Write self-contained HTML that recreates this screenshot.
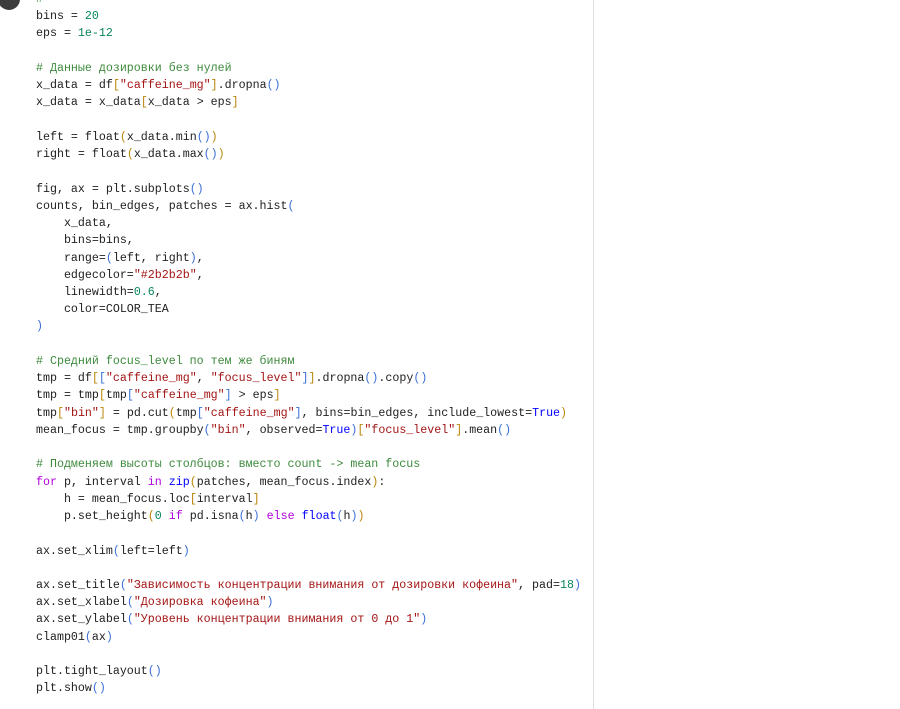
<!DOCTYPE html>
<html><head><meta charset="utf-8"><style>
html,body{margin:0;padding:0;background:#fff;width:900px;height:709px;overflow:hidden;position:relative}
pre{position:absolute;left:36px;top:-9px;margin:0;font-family:"Liberation Mono","DejaVu Sans Mono",monospace;font-size:11.65px;line-height:17.23px;color:#212121}
.c{color:#3d8a3d}.s{color:#a31515}.n{color:#098658}.k{color:#0000ff}.p{color:#af00db}.b{color:#3a6fd8}.g{color:#b8860b}
.vl{position:absolute;left:593px;top:0;width:1px;height:709px;background:#e0e0e0}
.dot{position:absolute;left:-2px;top:-12px;width:22px;height:22px;border-radius:50%;background:#3c3c3c}
</style></head><body>
<div class="dot"></div>
<div class="vl"></div>
<pre><span class="c">#</span>
bins = <span class="n">20</span>
eps = <span class="n">1e-12</span>

<span class="c"># Данные дозировки без нулей</span>
x_data = df<span class="g">[</span><span class="s">"caffeine_mg"</span><span class="g">]</span>.dropna<span class="b">()</span>
x_data = x_data<span class="g">[</span>x_data &gt; eps<span class="g">]</span>

left = float<span class="g">(</span>x_data.min<span class="b">()</span><span class="g">)</span>
right = float<span class="g">(</span>x_data.max<span class="b">()</span><span class="g">)</span>

fig, ax = plt.subplots<span class="b">()</span>
counts, bin_edges, patches = ax.hist<span class="b">(</span>
    x_data,
    bins=bins,
    range=<span class="b">(</span>left, right<span class="b">)</span>,
    edgecolor=<span class="s">"#2b2b2b"</span>,
    linewidth=<span class="n">0.6</span>,
    color=COLOR_TEA
<span class="b">)</span>

<span class="c"># Средний focus_level по тем же биням</span>
tmp = df<span class="g">[</span><span class="b">[</span><span class="s">"caffeine_mg"</span>, <span class="s">"focus_level"</span><span class="b">]</span><span class="g">]</span>.dropna<span class="b">()</span>.copy<span class="b">()</span>
tmp = tmp<span class="g">[</span>tmp<span class="b">[</span><span class="s">"caffeine_mg"</span><span class="b">]</span> &gt; eps<span class="g">]</span>
tmp<span class="g">[</span><span class="s">"bin"</span><span class="g">]</span> = pd.cut<span class="g">(</span>tmp<span class="b">[</span><span class="s">"caffeine_mg"</span><span class="b">]</span>, bins=bin_edges, include_lowest=<span class="k">True</span><span class="g">)</span>
mean_focus = tmp.groupby<span class="b">(</span><span class="s">"bin"</span>, observed=<span class="k">True</span><span class="b">)</span><span class="g">[</span><span class="s">"focus_level"</span><span class="g">]</span>.mean<span class="b">()</span>

<span class="c"># Подменяем высоты столбцов: вместо count -&gt; mean focus</span>
<span class="p">for</span> p, interval <span class="p">in</span> <span class="k">zip</span><span class="g">(</span>patches, mean_focus.index<span class="g">)</span>:
    h = mean_focus.loc<span class="g">[</span>interval<span class="g">]</span>
    p.set_height<span class="g">(</span><span class="n">0</span> <span class="p">if</span> pd.isna<span class="b">(</span>h<span class="b">)</span> <span class="p">else</span> <span class="k">float</span><span class="b">(</span>h<span class="b">)</span><span class="g">)</span>

ax.set_xlim<span class="b">(</span>left=left<span class="b">)</span>

ax.set_title<span class="b">(</span><span class="s">"Зависимость концентрации внимания от дозировки кофеина"</span>, pad=<span class="n">18</span><span class="b">)</span>
ax.set_xlabel<span class="b">(</span><span class="s">"Дозировка кофеина"</span><span class="b">)</span>
ax.set_ylabel<span class="b">(</span><span class="s">"Уровень концентрации внимания от 0 до 1"</span><span class="b">)</span>
clamp01<span class="b">(</span>ax<span class="b">)</span>

plt.tight_layout<span class="b">()</span>
plt.show<span class="b">()</span></pre>
</body></html>
